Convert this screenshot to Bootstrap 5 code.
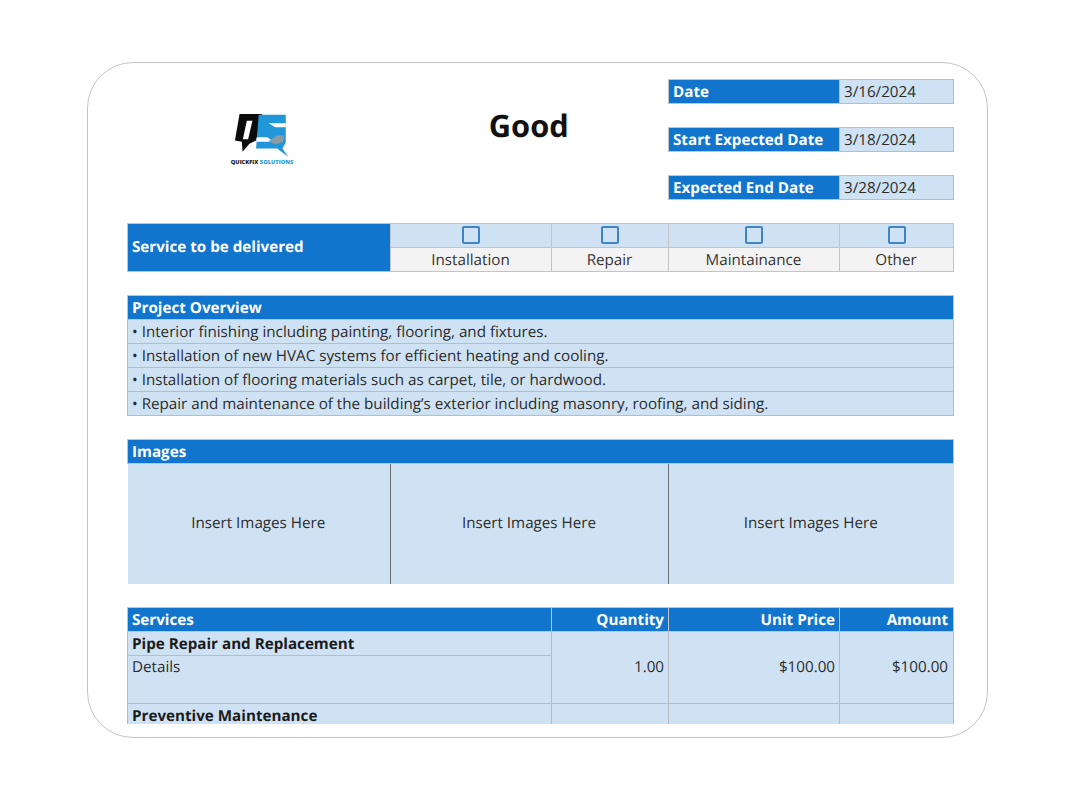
<!DOCTYPE html>
<html lang="en">
<head>
<meta charset="utf-8">
<title>Quote</title>
<link href="https://cdn.jsdelivr.net/npm/bootstrap@5.3.0/dist/css/bootstrap.min.css" rel="stylesheet">
<style>
body { background: #fff; font-family: "Open Sans", "Liberation Sans", sans-serif; text-rendering: geometricPrecision; }
.sheet-card { width: 901px; height: 676px; border: 1px solid #c4c4c4; border-radius: 46px; padding: 16px 35px 13px 39px; }
.sheet-clip { height: 645px; overflow: hidden; width: 827px; }
.sheet { table-layout: fixed; width: 826px; border-collapse: collapse; font-size: 15.2px; line-height: 20px; color: #2b2b2b; margin: 0; }
.sheet tr { height: 24px; }
.sheet td { padding: 1px 4px 0 4px; height: 24px; border: 0; background: transparent; color: #2b2b2b; white-space: nowrap; vertical-align: middle; box-shadow: none; overflow: visible; }
.sheet td.hd { background: #1175ce; color: #fff; font-weight: 700; border: 1px solid #bfc5cc; }
.sheet td.lt { background: #cfe2f3; border: 1px solid #b9bdc1; }
.sheet td.gr { background: #f3f3f3; border: 1px solid #c4c4c4; text-align: center; color: #333; padding-right: 5px; }
.sheet td.ck { background: #cfe2f3; border: 1px solid #c4c4c4; text-align: center; padding: 0 0 2px 0; }
.sheet td.im { background: #cfe2f3; text-align: center; padding: 0 5px 2px 4px; }
.sheet td.dv { border-left: 1px solid #6b6f73; }
.sheet td.pl { background: #cfe2f3; border: 1px solid #b9bdc1; font-weight: 700; color: #1b1b1b; }
.sheet td.span { padding-top: 0; padding-bottom: 1px; }
.sheet td.det { padding-top: 1px; }
.sheet td.last { padding-right: 5px; }
.sheet td.tt { font-size: 30.8px; font-weight: 700; color: #111; text-align: center; vertical-align: top; padding: 26px 5px 0 4px; line-height: 40px; }
.box { display: block; width: 18px; height: 18px; margin: 0 auto; border: 2px solid #3d85c6; border-radius: 2px; }
.logo { display: block; width: 66px; height: 53px; }
.logo-wrap { width: 66px; margin: 32px auto 0 auto; position: relative; left: 3px; }
.logo-text { display: block; font-size: 5.7px; line-height: 6px; font-weight: 800; text-align: center; color: #222; margin: -6px -5px 0 -5px; }
.logo-text span { color: #2a9fd8; }
</style>
</head>
<body>
<div class="d-flex justify-content-center align-items-center min-vh-100">
  <div class="card sheet-card">
    <div class="sheet-clip">
      <table class="table table-borderless sheet">
        <colgroup><col style="width:263px"><col style="width:161px"><col style="width:117px"><col style="width:171px"><col style="width:114px"></colgroup>
        <tbody>
          <tr>
            <td rowspan="6" class="align-top p-0">
              <div class="logo-wrap">
                <svg class="logo" viewBox="60 40 200 160" xmlns="http://www.w3.org/2000/svg" aria-hidden="true">
                  <path fill="#0b0b0b" fill-rule="evenodd" d="M92 46H160L142 126 122 136 101 160 99 130 78 126ZM114 66 102 122H118L131 66Z"/>
                  <path fill="#2196d8" d="M150 48H232V132L222 150 240 176 206 150H142Z"/>
                  <path fill="#fff" d="M180 74H232V86H200Z"/>
                  <path fill="#fff" d="M145 116H176L196 130H143Z"/>
                  <path fill="#8e9aa3" d="M180 128 204 112 228 110 224 130 202 138Z"/>
                </svg>
                <span class="logo-text">QUICKFIX <span>SOLUTIONS</span></span>
              </div>
            </td>
            <td colspan="2" rowspan="6" class="tt">Good</td>
            <td class="hd">Date</td>
            <td class="lt">3/16/2024</td>
          </tr>
          <tr><td colspan="2"></td></tr>
          <tr><td class="hd">Start Expected Date</td><td class="lt">3/18/2024</td></tr>
          <tr><td colspan="2"></td></tr>
          <tr><td class="hd">Expected End Date</td><td class="lt">3/28/2024</td></tr>
          <tr><td colspan="2"></td></tr>
          <tr>
            <td rowspan="2" class="hd span">Service to be delivered</td>
            <td class="ck"><span class="box"></span></td>
            <td class="ck"><span class="box"></span></td>
            <td class="ck"><span class="box"></span></td>
            <td class="ck"><span class="box"></span></td>
          </tr>
          <tr><td class="gr">Installation</td><td class="gr">Repair</td><td class="gr">Maintainance</td><td class="gr">Other</td></tr>
          <tr><td colspan="5"></td></tr>
          <tr><td colspan="5" class="hd">Project Overview</td></tr>
          <tr><td colspan="5" class="lt">• Interior finishing including painting, flooring, and fixtures.</td></tr>
          <tr><td colspan="5" class="lt">• Installation of new HVAC systems for efficient heating and cooling.</td></tr>
          <tr><td colspan="5" class="lt">• Installation of flooring materials such as carpet, tile, or hardwood.</td></tr>
          <tr><td colspan="5" class="lt">• Repair and maintenance of the building’s exterior including masonry, roofing, and siding.</td></tr>
          <tr><td colspan="5"></td></tr>
          <tr><td colspan="5" class="hd">Images</td></tr>
          <tr>
            <td rowspan="5" class="im">Insert Images Here</td>
            <td rowspan="5" colspan="2" class="im dv">Insert Images Here</td>
            <td rowspan="5" colspan="2" class="im dv">Insert Images Here</td>
          </tr>
          <tr><td class="d-none"></td></tr>
          <tr><td class="d-none"></td></tr>
          <tr><td class="d-none"></td></tr>
          <tr><td class="d-none"></td></tr>
          <tr><td colspan="5"></td></tr>
          <tr>
            <td colspan="2" class="hd">Services</td>
            <td class="hd text-end">Quantity</td>
            <td class="hd text-end">Unit Price</td>
            <td class="hd text-end last">Amount</td>
          </tr>
          <tr>
            <td colspan="2" class="pl">Pipe Repair and Replacement</td>
            <td rowspan="3" class="lt text-end span">1.00</td>
            <td rowspan="3" class="lt text-end span">$100.00</td>
            <td rowspan="3" class="lt text-end last span">$100.00</td>
          </tr>
          <tr><td colspan="2" rowspan="2" class="lt align-top det">Details</td></tr>
          <tr><td class="d-none"></td></tr>
          <tr>
            <td colspan="2" class="pl">Preventive Maintenance</td>
            <td class="lt"></td><td class="lt"></td><td class="lt"></td>
          </tr>
        </tbody>
      </table>
    </div>
  </div>
</div>
<script src="https://cdn.jsdelivr.net/npm/bootstrap@5.3.0/dist/js/bootstrap.bundle.min.js"></script>
</body>
</html>
